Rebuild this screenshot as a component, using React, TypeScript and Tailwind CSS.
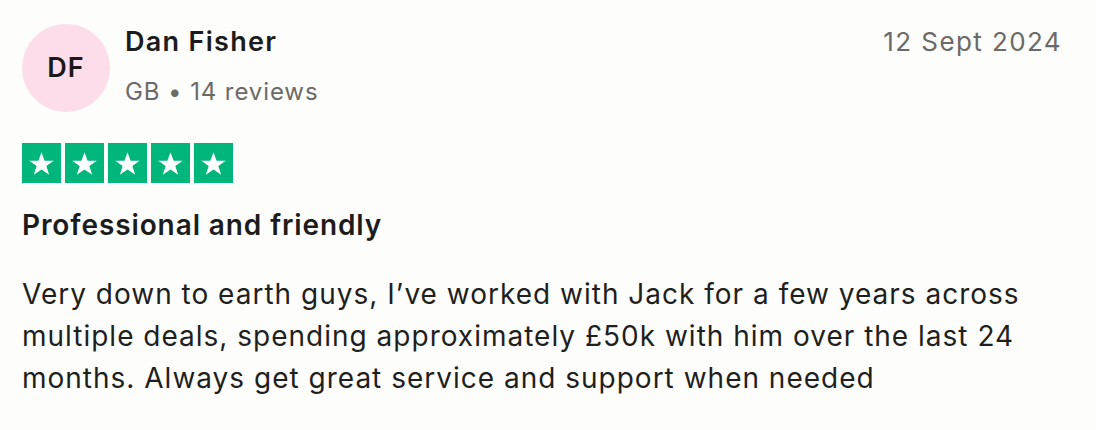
import { Fragment } from "react";

const review = {
  initials: "DF",
  name: "Dan Fisher",
  country: "GB",
  reviews: 14,
  date: "12 Sept 2024",
  rating: 5,
  title: "Professional and friendly",
  body: "Very down to earth guys, I’ve worked with Jack for a few years across multiple deals, spending approximately £50k with him over the last 24 months. Always get great service and support when needed",
};

function Star() {
  return (
    <div className="w-[39px] h-[40px] bg-[#00b67a] flex items-center justify-center">
      <svg viewBox="0 0 24 24" className="w-[29px] h-[29px]">
        <path
          d="M12 2.6l2.55 7.1h7.55l-6.1 4.45 2.35 7.25L12 16.9l-6.35 4.5 2.35-7.25L1.9 9.7h7.55z"
          fill="#ffffff"
        />
      </svg>
    </div>
  );
}

export default function App() {
  return (
    <div
      className="w-[1096px] h-[430px] bg-[#fdfdfc] text-[#1c1c1c] pl-[22px] pr-[34px] pt-[24px]"
      style={{ fontFamily: "Inter, 'Noto Sans', sans-serif" }}
    >
      <div className="flex items-start">
        <div className="w-[88px] h-[88px] rounded-full bg-[#fddde9] flex items-center justify-center text-[27px] font-semibold tracking-[1px] text-[#1a1a1a]">
          {review.initials}
        </div>
        <div className="ml-[15px] flex-1">
          <div className="text-[27px] leading-[36px] font-semibold tracking-[1.3px]">{review.name}</div>
          <div className="mt-[16px] text-[24px] leading-[32px] tracking-[0.9px] text-[#6b6a66]">
            {review.country} • {review.reviews} reviews
          </div>
        </div>
        <div className="text-[26px] leading-[36px] tracking-[1.4px] text-[#6b6a66]">{review.date}</div>
      </div>

      <div className="mt-[31px] flex gap-[4px]">
        {Array.from({ length: review.rating }).map((_, i) => (
          <Fragment key={i}>
            <Star />
          </Fragment>
        ))}
      </div>

      <h2 className="mt-[24px] text-[28px] leading-[36px] font-semibold tracking-[0.9px]">{review.title}</h2>

      <p className="mt-[30px] text-[28px] leading-[42px] tracking-[1px] text-[#1f1f1d]">{review.body}</p>
    </div>
  );
}
